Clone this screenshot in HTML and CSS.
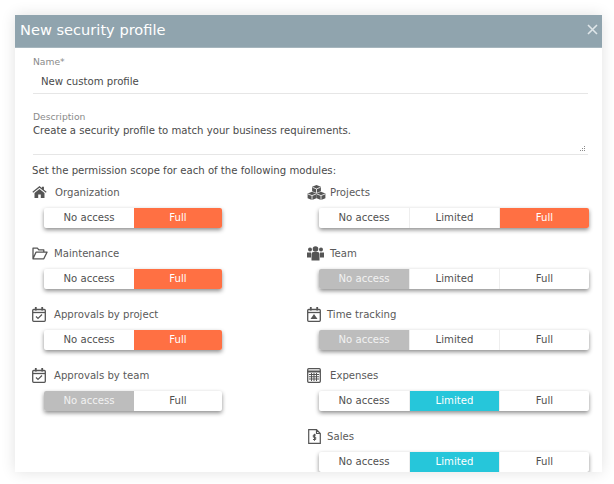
FILE: index.html
```html
<!DOCTYPE html>
<html lang="en">
<head>
<meta charset="utf-8">
<title>New security profile</title>
<link rel="stylesheet" href="styles.css">
</head>
<body>
<div class="modal">
  <header class="modal-head">
    <h1 class="modal-title">New security profile</h1>
    <svg class="close" width="11" height="11" viewBox="0 0 11 11"><path d="M1 1l9 9M10 1l-9 9" stroke="#dfe6e9" stroke-width="1.6" fill="none"/></svg>
  </header>
  <div class="modal-body">
    <div class="field field-name">
      <div class="field-label">Name*</div>
      <div class="field-value">New custom profile</div>
    </div>
    <div class="field field-desc">
      <div class="field-label">Description</div>
      <div class="field-text">Create a security profile to match your business requirements.</div>
      <svg class="grip" width="7" height="7" viewBox="0 0 7 7"><path d="M5 0h1v1H5zM5 2h1v1H5zM3 2h1v1H3zM5 4h1v1H5zM3 4h1v1H3zM1 4h1v1H1z" fill="#8a8a8a"/></svg>
    </div>
    <p class="scope">Set the permission scope for each of the following modules:</p>
    <div class="modules">
      <div class="column">
        <section class="module">
          <div class="module-label">
            <svg class="icon" width="15" height="12" viewBox="0 0 16 13"><path d="M8 0L.3 6.300l.8 1L8 1.800l6.900 5.500.8-1L12.800 4V.8h-2.200v1.400z" fill="#555"/><path d="M8 3.200L2.600 7.600V13h4V9.300h2.800V13h4V7.600z" fill="#555"/></svg>
            <span class="module-name gap-8">Organization</span>
          </div>
          <div class="toggle two"><span class="opt">No access</span><span class="opt on-orange">Full</span></div>
        </section>
        <section class="module">
          <div class="module-label">
            <svg class="icon" width="16" height="13" viewBox="0 0 16 13"><path d="M1 11.500V1.200h4.400l1.400 1.700h5v2.200M1 11.800h10.800L15 5.200H4z" fill="none" stroke="#555" stroke-width="1.300" stroke-linejoin="round"/></svg>
            <span class="module-name gap-6">Maintenance</span>
          </div>
          <div class="toggle two"><span class="opt">No access</span><span class="opt on-orange">Full</span></div>
        </section>
        <section class="module">
          <div class="module-label">
            <svg class="icon" width="14" height="15" viewBox="0 0 14 15"><rect x=".7" y="2.500" width="12.600" height="11.800" rx="1" fill="none" stroke="#555" stroke-width="1.300"/><path d="M1 5.500h12" stroke="#555" stroke-width="1.300"/><path d="M3.800 0v3.500M10.200 0v3.500" stroke="#555" stroke-width="1.800"/><path d="M4 9.500l2 2 4-4" fill="none" stroke="#555" stroke-width="1.200"/></svg>
            <span class="module-name gap-8">Approvals by project</span>
          </div>
          <div class="toggle two"><span class="opt">No access</span><span class="opt on-orange">Full</span></div>
        </section>
        <section class="module">
          <div class="module-label">
            <svg class="icon" width="14" height="15" viewBox="0 0 14 15"><rect x=".7" y="2.500" width="12.600" height="11.800" rx="1" fill="none" stroke="#555" stroke-width="1.300"/><path d="M1 5.500h12" stroke="#555" stroke-width="1.300"/><path d="M3.800 0v3.500M10.200 0v3.500" stroke="#555" stroke-width="1.800"/><path d="M4 9.500l2 2 4-4" fill="none" stroke="#555" stroke-width="1.200"/></svg>
            <span class="module-name gap-8">Approvals by team</span>
          </div>
          <div class="toggle two"><span class="opt on-grey">No access</span><span class="opt">Full</span></div>
        </section>
      </div>
      <div class="column">
        <section class="module">
          <div class="module-label">
            <svg class="icon" width="19" height="15" viewBox="0 0 19 15"><path d="M9.500 0l4.400 1.800v4.400L9.500 8 5.100 6.200V1.800zM5 6.800l4.400 1.800v4.600L5 15 .6 13.200V8.600zM14 6.800l4.400 1.800v4.600L14 15l-4.400-1.800V8.600z" fill="#555"/><path d="M5.500 2.300l4 1.600 4-1.600M9.500 4v4M1 9l4 1.600L9 9M5 10.600V15M10 9l4 1.600L18 9M14 10.600V15" fill="none" stroke="#fff" stroke-width=".8"/></svg>
            <span class="module-name gap-4">Projects</span>
          </div>
          <div class="toggle three"><span class="opt">No access</span><span class="opt">Limited</span><span class="opt on-orange">Full</span></div>
        </section>
        <section class="module">
          <div class="module-label">
            <svg class="icon" width="17" height="15" viewBox="0 0 17 15"><circle cx="8.500" cy="3" r="2.800" fill="#555"/><circle cx="3" cy="3.500" r="2" fill="#555"/><circle cx="14" cy="3.500" r="2" fill="#555"/><path d="M0 6.500h4v5H0zM13 6.500h4v5h-4z" fill="#555"/><path d="M4.500 8q0-2 2-2h4q2 0 2 2v6.500h-8z" fill="#555"/></svg>
            <span class="module-name gap-6">Team</span>
          </div>
          <div class="toggle three"><span class="opt on-grey">No access</span><span class="opt">Limited</span><span class="opt">Full</span></div>
        </section>
        <section class="module">
          <div class="module-label">
            <svg class="icon" width="14" height="15" viewBox="0 0 14 15"><rect x=".7" y="2.500" width="12.600" height="11.800" rx="1" fill="none" stroke="#555" stroke-width="1.300"/><path d="M1 5.500h12" stroke="#555" stroke-width="1.300"/><path d="M3.800 0v3.500M10.200 0v3.500" stroke="#555" stroke-width="1.800"/><path d="M7 7l3.500 5h-7z" fill="#555"/></svg>
            <span class="module-name gap-6">Time tracking</span>
          </div>
          <div class="toggle three"><span class="opt on-grey">No access</span><span class="opt">Limited</span><span class="opt">Full</span></div>
        </section>
        <section class="module">
          <div class="module-label">
            <svg class="icon" width="14" height="15" viewBox="0 0 14 15"><rect x=".7" y=".7" width="12.600" height="13.600" rx="1" fill="none" stroke="#555" stroke-width="1.300"/><path d="M1 3.500h12" stroke="#555" stroke-width="2"/><path d="M2 6h10v1H2zM2 8.200h10v1H2zM2 10.400h10v1H2z" fill="#555"/><path d="M4.500 5v8M7 5v8M9.500 5v8" stroke="#555"/></svg>
            <span class="module-name gap-9">Expenses</span>
          </div>
          <div class="toggle three"><span class="opt">No access</span><span class="opt on-cyan">Limited</span><span class="opt">Full</span></div>
        </section>
        <section class="module">
          <div class="module-label">
            <svg class="icon icon-inset" width="13" height="15" viewBox="0 0 13 15"><path d="M.7.700h7.800l3.800 3.800v9.800H.7zM8.500.700v3.800h3.800" fill="none" stroke="#555" stroke-width="1.200"/><path d="M8 6H5.300v2.200H7.700v2.300H5M6.500 4.800v7" fill="none" stroke="#555"/></svg>
            <span class="module-name gap-6">Sales</span>
          </div>
          <div class="toggle three"><span class="opt">No access</span><span class="opt on-cyan">Limited</span><span class="opt">Full</span></div>
        </section>
      </div>
    </div>
  </div>
</div>
</body>
</html>
```

FILE: styles.css
```css
html, body {
  margin: 0;
  height: 100%;
  overflow: hidden;
  background: #fff;
}
body {
  padding: 15px 12px 12px 15px;
  box-sizing: border-box;
  font-family: "DejaVu Sans", sans-serif;
  font-size: 10.150px;
  color: #4a4a4a;
}
.modal {
  width: 587px;
  height: 457px;
  background: #fff;
  box-shadow: 0 0 14px rgba(0, 0, 0, 0.12);
  overflow: hidden;
}
.modal-head {
  height: 33px;
  box-sizing: border-box;
  padding: 0 4px 3px 5px;
  background: #90a4ae;
  border-bottom: 1px solid #a6b6be;
  display: flex;
  align-items: center;
  justify-content: space-between;
}
.modal-title {
  margin: 0;
  font-size: 14.600px;
  font-weight: 400;
  color: #fff;
}
.modal-body {
  padding: 8px 14px 0 17px;
}
.field {
  position: relative;
  margin-left: 1px;
  border-bottom: 1px solid #e6e6e6;
}
.field-label {
  font-size: 9.200px;
  line-height: 11px;
  color: #8a8a8a;
}
.field-name {
  height: 37px;
}
.field-value {
  padding: 8px 0 0 8px;
  line-height: 14px;
}
.field-desc {
  margin-top: 17px;
  height: 43px;
}
.field-text {
  padding-top: 2px;
  line-height: 14px;
}
.grip {
  position: absolute;
  right: 2px;
  bottom: 1px;
}
.scope {
  margin: 9px 0 0;
  line-height: 14px;
}
.modules {
  display: grid;
  grid-template-columns: 275px 1fr;
  margin-top: 3px;
}
.module {
  height: 61px;
}
.module-label {
  display: flex;
  align-items: center;
  height: 22px;
}
.module-name {
  color: #5a5a5a;
}
.gap-4 { margin-left: 4px; }
.gap-6 { margin-left: 6px; }
.gap-8 { margin-left: 8px; }
.gap-9 { margin-left: 9px; }
.icon {
  flex: none;
}
.icon-inset {
  margin-left: 1px;
}
.toggle {
  display: flex;
  height: 20px;
  margin: 5px 0 0 12px;
  background: #fff;
  border-radius: 2px;
  box-shadow: 0 2px 4px rgba(0, 0, 0, 0.45);
}
.two { width: 178px; }
.three { width: 270px; }
.opt {
  box-sizing: border-box;
  text-align: center;
  line-height: 20px;
  color: #505050;
}
.two .opt { flex: 0 0 88px; }
.two .opt:first-child { flex-basis: 90px; }
.three .opt { flex: 0 0 90px; }
.three .opt + .opt {
  border-left: 1px solid #eee;
}
.opt:first-child { border-radius: 2px 0 0 2px; }
.opt:last-child { border-radius: 0 2px 2px 0; }
.three .on-orange, .three .on-cyan { border-left-color: transparent; }
.on-orange { background: #ff7043; color: #fff; }
.on-grey { background: #bdbdbd; color: #f2f2f2; }
.on-cyan { background: #26c6da; color: #fff; }
```
